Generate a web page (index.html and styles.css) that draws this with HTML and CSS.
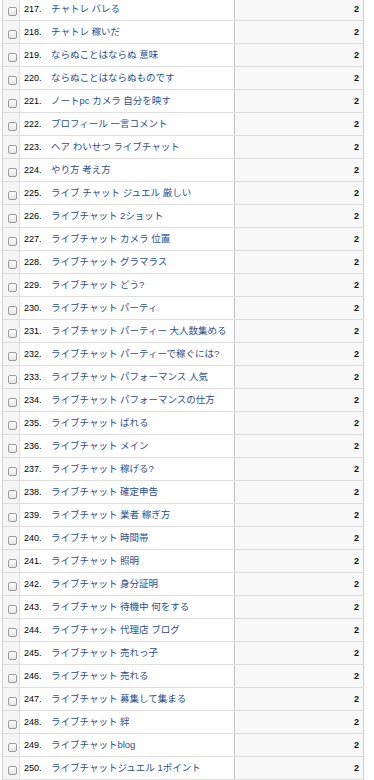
FILE: index.html
```html
<!DOCTYPE html>
<html lang="ja">
<head>
<meta charset="utf-8">
<title>キーワード</title>
<link rel="stylesheet" href="styles.css">
</head>
<body>
<div class="table">
  <div class="row"><div class="c-check"><input type="checkbox"></div><div class="c-key"><span class="num">217.</span><a href="#">チャトレ バレる</a></div><div class="c-count">2</div></div>
  <div class="row"><div class="c-check"><input type="checkbox"></div><div class="c-key"><span class="num">218.</span><a href="#">チャトレ 稼いだ</a></div><div class="c-count">2</div></div>
  <div class="row"><div class="c-check"><input type="checkbox"></div><div class="c-key"><span class="num">219.</span><a href="#">ならぬことはならぬ 意味</a></div><div class="c-count">2</div></div>
  <div class="row"><div class="c-check"><input type="checkbox"></div><div class="c-key"><span class="num">220.</span><a href="#">ならぬことはならぬものです</a></div><div class="c-count">2</div></div>
  <div class="row"><div class="c-check"><input type="checkbox"></div><div class="c-key"><span class="num">221.</span><a href="#">ノートpc カメラ 自分を映す</a></div><div class="c-count">2</div></div>
  <div class="row"><div class="c-check"><input type="checkbox"></div><div class="c-key"><span class="num">222.</span><a href="#">プロフィール 一言コメント</a></div><div class="c-count">2</div></div>
  <div class="row"><div class="c-check"><input type="checkbox"></div><div class="c-key"><span class="num">223.</span><a href="#">ヘア わいせつ ライブチャット</a></div><div class="c-count">2</div></div>
  <div class="row"><div class="c-check"><input type="checkbox"></div><div class="c-key"><span class="num">224.</span><a href="#">やり方 考え方</a></div><div class="c-count">2</div></div>
  <div class="row"><div class="c-check"><input type="checkbox"></div><div class="c-key"><span class="num">225.</span><a href="#">ライブ チャット ジュエル 厳しい</a></div><div class="c-count">2</div></div>
  <div class="row"><div class="c-check"><input type="checkbox"></div><div class="c-key"><span class="num">226.</span><a href="#">ライブチャット 2ショット</a></div><div class="c-count">2</div></div>
  <div class="row"><div class="c-check"><input type="checkbox"></div><div class="c-key"><span class="num">227.</span><a href="#">ライブチャット カメラ 位置</a></div><div class="c-count">2</div></div>
  <div class="row"><div class="c-check"><input type="checkbox"></div><div class="c-key"><span class="num">228.</span><a href="#">ライブチャット グラマラス</a></div><div class="c-count">2</div></div>
  <div class="row"><div class="c-check"><input type="checkbox"></div><div class="c-key"><span class="num">229.</span><a href="#">ライブチャット どう?</a></div><div class="c-count">2</div></div>
  <div class="row"><div class="c-check"><input type="checkbox"></div><div class="c-key"><span class="num">230.</span><a href="#">ライブチャット パーティ</a></div><div class="c-count">2</div></div>
  <div class="row"><div class="c-check"><input type="checkbox"></div><div class="c-key"><span class="num">231.</span><a href="#">ライブチャット パーティー 大人数集める</a></div><div class="c-count">2</div></div>
  <div class="row"><div class="c-check"><input type="checkbox"></div><div class="c-key"><span class="num">232.</span><a href="#">ライブチャット パーティーで稼ぐには?</a></div><div class="c-count">2</div></div>
  <div class="row"><div class="c-check"><input type="checkbox"></div><div class="c-key"><span class="num">233.</span><a href="#">ライブチャット パフォーマンス 人気</a></div><div class="c-count">2</div></div>
  <div class="row"><div class="c-check"><input type="checkbox"></div><div class="c-key"><span class="num">234.</span><a href="#">ライブチャット パフォーマンスの仕方</a></div><div class="c-count">2</div></div>
  <div class="row"><div class="c-check"><input type="checkbox"></div><div class="c-key"><span class="num">235.</span><a href="#">ライブチャット ばれる</a></div><div class="c-count">2</div></div>
  <div class="row"><div class="c-check"><input type="checkbox"></div><div class="c-key"><span class="num">236.</span><a href="#">ライブチャット メイン</a></div><div class="c-count">2</div></div>
  <div class="row"><div class="c-check"><input type="checkbox"></div><div class="c-key"><span class="num">237.</span><a href="#">ライブチャット 稼げる?</a></div><div class="c-count">2</div></div>
  <div class="row"><div class="c-check"><input type="checkbox"></div><div class="c-key"><span class="num">238.</span><a href="#">ライブチャット 確定申告</a></div><div class="c-count">2</div></div>
  <div class="row"><div class="c-check"><input type="checkbox"></div><div class="c-key"><span class="num">239.</span><a href="#">ライブチャット 業者 稼ぎ方</a></div><div class="c-count">2</div></div>
  <div class="row"><div class="c-check"><input type="checkbox"></div><div class="c-key"><span class="num">240.</span><a href="#">ライブチャット 時間帯</a></div><div class="c-count">2</div></div>
  <div class="row"><div class="c-check"><input type="checkbox"></div><div class="c-key"><span class="num">241.</span><a href="#">ライブチャット 照明</a></div><div class="c-count">2</div></div>
  <div class="row"><div class="c-check"><input type="checkbox"></div><div class="c-key"><span class="num">242.</span><a href="#">ライブチャット 身分証明</a></div><div class="c-count">2</div></div>
  <div class="row"><div class="c-check"><input type="checkbox"></div><div class="c-key"><span class="num">243.</span><a href="#">ライブチャット 待機中 何をする</a></div><div class="c-count">2</div></div>
  <div class="row"><div class="c-check"><input type="checkbox"></div><div class="c-key"><span class="num">244.</span><a href="#">ライブチャット 代理店 ブログ</a></div><div class="c-count">2</div></div>
  <div class="row"><div class="c-check"><input type="checkbox"></div><div class="c-key"><span class="num">245.</span><a href="#">ライブチャット 売れっ子</a></div><div class="c-count">2</div></div>
  <div class="row"><div class="c-check"><input type="checkbox"></div><div class="c-key"><span class="num">246.</span><a href="#">ライブチャット 売れる</a></div><div class="c-count">2</div></div>
  <div class="row"><div class="c-check"><input type="checkbox"></div><div class="c-key"><span class="num">247.</span><a href="#">ライブチャット 募集して集まる</a></div><div class="c-count">2</div></div>
  <div class="row"><div class="c-check"><input type="checkbox"></div><div class="c-key"><span class="num">248.</span><a href="#">ライブチャット 絆</a></div><div class="c-count">2</div></div>
  <div class="row"><div class="c-check"><input type="checkbox"></div><div class="c-key"><span class="num">249.</span><a href="#">ライブチャットblog</a></div><div class="c-count">2</div></div>
  <div class="row"><div class="c-check"><input type="checkbox"></div><div class="c-key"><span class="num">250.</span><a href="#">ライブチャットジュエル 1ポイント</a></div><div class="c-count">2</div></div>
</div>
</body>
</html>
```
FILE: styles.css
```css
html, body {
  margin: 0;
  padding: 0;
  background: #fff;
}
body {
  font-family: "Liberation Sans", "Noto Sans CJK JP", sans-serif;
  font-size: 9px;
  color: #000;
}
.table {
  margin: -2px 0 0 2px;
  width: max-content;
  border-left: 1px solid #cfcfcf;
}
.row {
  display: grid;
  grid-template-columns: 17px 215px 129px;
  height: 23px;
  box-sizing: border-box;
  border-bottom: 1px solid #dedede;
  line-height: 22px;
}
.c-check {
  background: #f5f5f5;
  border-right: 1px solid #dedede;
}
.c-check input {
  -webkit-appearance: none;
  appearance: none;
  display: block;
  width: 9px;
  height: 9px;
  margin: 9px 0 0 5px;
  box-sizing: border-box;
  border: 1px solid #9c9c9c;
  border-radius: 2px;
  background: linear-gradient(#ffffff, #e4e4e4);
}
.c-key {
  border-right: 1px solid #c8c8c8;
  padding-left: 4px;
  white-space: nowrap;
  overflow: hidden;
}
.num {
  display: inline-block;
  width: 27px;
  color: #000;
}
.c-key a {
  color: #2a4f90;
  text-decoration: none;
  font-size: 9.5px;
}
.c-count {
  background: #f8f8f8;
  border-right: 1px solid #cccccc;
  text-align: right;
  padding-right: 4px;
  font-weight: bold;
  color: #111;
}
```
